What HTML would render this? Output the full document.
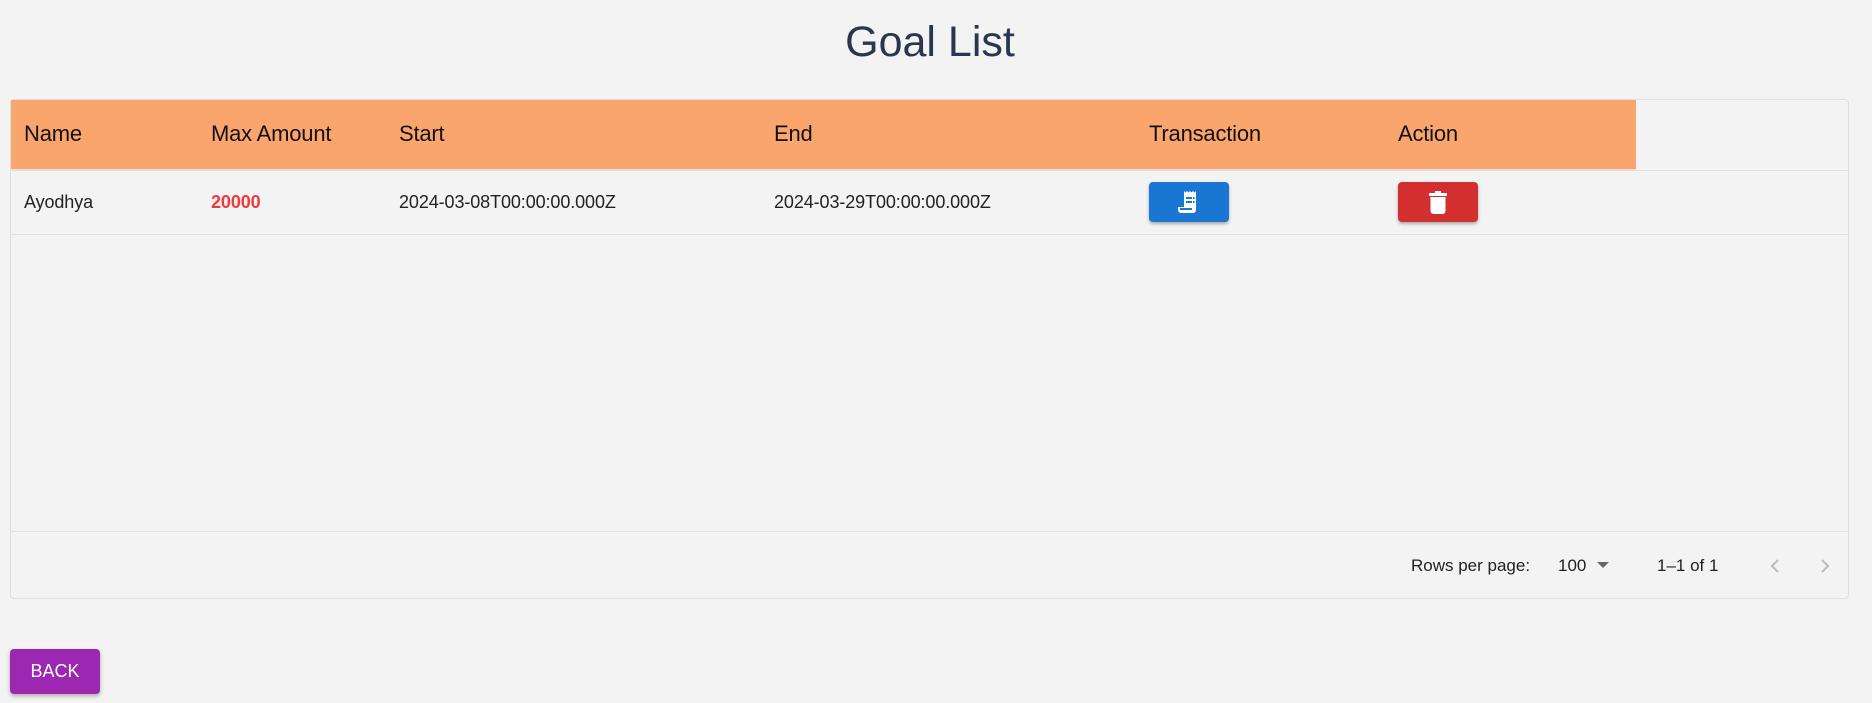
<!DOCTYPE html>
<html><head><meta charset="utf-8"><style>
*{box-sizing:border-box;margin:0;padding:0}
body{width:1872px;height:703px;background:#f3f3f3;font-family:"Liberation Sans",Arial,sans-serif;position:relative;overflow:hidden}
h1{position:absolute;top:18px;left:-6px;width:1872px;text-align:center;font-weight:400;font-size:43px;color:#2a3550}
.tbl{position:absolute;left:10px;top:99px;width:1839px;height:500px;border:1px solid #dedede;border-radius:4px;background:#f3f3f3}
.hdr{position:absolute;left:0;top:0;width:1625px;height:70px;background:#faa56e;border-bottom:1px solid #e0e0e0}
.c{position:absolute;white-space:nowrap}
.hdr .c{top:21px;font-size:22px;color:#111;letter-spacing:-0.2px}
.row{position:absolute;left:0;top:70px;width:100%;height:65px;border-top:1px solid #e0e0e0;border-bottom:1px solid #e0e0e0}
.row .c{top:21px;font-size:18px;color:#222;letter-spacing:-0.1px}
.btn{position:absolute;top:11px;width:80px;height:40px;border-radius:4px;box-shadow:0 2px 3px rgba(0,0,0,.3);display:flex;align-items:center;justify-content:center}
.foot{position:absolute;left:0;top:431px;width:100%;border-top:1px solid #e0e0e0;height:68px}
.foot .c{top:24px;font-size:17px;color:#222}
.back{position:absolute;left:10px;top:649px;width:90px;height:45px;background:#9c27b0;border-radius:4px;color:#fff;font-size:18px;display:flex;align-items:center;justify-content:center;box-shadow:0 2px 4px rgba(0,0,0,.3)}
</style></head><body>
<h1>Goal List</h1>
<div class="tbl">
 <div class="hdr">
  <div class="c" style="left:13px">Name</div>
  <div class="c" style="left:200px">Max Amount</div>
  <div class="c" style="left:388px">Start</div>
  <div class="c" style="left:763px">End</div>
  <div class="c" style="left:1138px">Transaction</div>
  <div class="c" style="left:1387px">Action</div>
 </div>
 <div class="row">
  <div class="c" style="left:13px">Ayodhya</div>
  <div class="c" style="left:200px;color:#f0393d;font-weight:bold">20000</div>
  <div class="c" style="left:388px">2024-03-08T00:00:00.000Z</div>
  <div class="c" style="left:763px">2024-03-29T00:00:00.000Z</div>
  <div class="btn" style="left:1138px;background:#1976d2"><svg width="28" height="28" viewBox="0 0 28 28"><path d="M9 3l1.5 1.5L12 3l1.5 1.5L15 3l1.5 1.5L18 3l1.5 1.5L21 3v19a3 3 0 0 1-3 3H6a3 3 0 0 1-3-3v-3h6z" fill="#fff"/><path d="M11 9h6v2h-6zM11 13h6v2h-6zM18 9h1.5v2H18zM18 13h1.5v2H18zM5 20h12v2H5z" fill="#1976d2"/></svg></div>
  <div class="btn" style="left:1387px;background:#d32f2f"><svg width="24" height="28" viewBox="0 0 24 28"><path d="M3 5h18v3H3zM9 3h6v2H9zM4.5 9h15v14a3 3 0 0 1-3 3h-9a3 3 0 0 1-3-3z" fill="#fff"/></svg></div>
 </div>
 <div class="foot">
  <div class="c" style="left:1400px">Rows per page:</div>
  <div class="c" style="left:1547px">100</div>
  <div class="c" style="left:1586px;top:30px;width:0;height:0;border-left:6px solid transparent;border-right:6px solid transparent;border-top:6px solid #666"></div>
  <div class="c" style="left:1646px">1–1 of 1</div>
  <svg class="c" style="left:1755px;top:24px" width="20" height="20" viewBox="0 0 20 20"><path d="M12 4l-6 6 6 6" stroke="#bbb" stroke-width="2" fill="none"/></svg>
  <svg class="c" style="left:1803px;top:24px" width="20" height="20" viewBox="0 0 20 20"><path d="M8 4l6 6-6 6" stroke="#bbb" stroke-width="2" fill="none"/></svg>
 </div>
</div>
<div class="back">BACK</div>
</body></html>
